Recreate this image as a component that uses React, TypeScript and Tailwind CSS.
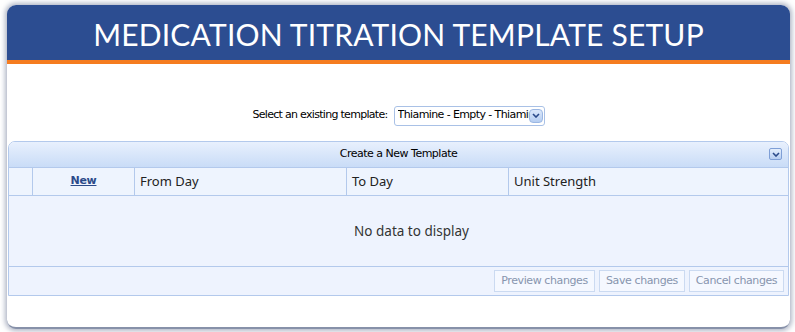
import React from 'react';

const columns = [
  { label: 'From Day', w: 'w-[212px]' },
  { label: 'To Day', w: 'w-[162px]' },
  { label: 'Unit Strength', w: 'flex-1' },
];

const ChevronDown: React.FC = () => (
  <svg width="8" height="5" viewBox="0 0 8 5">
    <path d="M1 1 L4 4 L7 1" fill="none" stroke="#2b4a8a" strokeWidth="1.6" />
  </svg>
);

const App: React.FC = () => {
  return (
    <div className="w-[795px] h-[332px] bg-white pt-[5px] pl-[7px] pr-[5px] overflow-hidden">
      <div className="w-[783px] h-[324px] bg-white rounded-[9px] overflow-hidden flex flex-col shadow-[0_0_5px_2px_rgba(110,120,150,0.55)] border-b-[2px] border-[#8791a9]">
        <header className="h-[55px] shrink-0 bg-[#2c4d91] flex items-center justify-center">
          <h1 className="text-white text-[30px] tracking-[0.2px] leading-none font-['Lato','Noto_Sans',sans-serif] font-normal pt-[2px]">
            MEDICATION TITRATION TEMPLATE SETUP
          </h1>
        </header>
        <div className="h-[4px] shrink-0 bg-[#f57c20]" />

        <div className="flex items-center justify-center gap-[6px] pt-[26px] h-[77px] font-['DejaVu_Sans',Verdana,sans-serif] text-[11px] text-black">
          <span className="tracking-[-0.7px]">Select an existing template:</span>
          <div className="flex items-center h-[20px] w-[151px] border border-[#a9c1e6] rounded-[3px] bg-white pl-[3px] pr-[1px]">
            <span className="flex-1 min-w-0 overflow-hidden whitespace-nowrap tracking-[-0.6px]">Thiamine - Empty - Thiamir</span>
            <span className="w-[14px] h-[14px] rounded-[4px] bg-gradient-to-b from-[#dbe8fb] to-[#b5cdf1] border border-[#9bb7e3] flex items-center justify-center shrink-0">
              <ChevronDown />
            </span>
          </div>
        </div>

        <div className="mx-[1px] border border-[#b3c9ec] rounded-t-[7px] font-['Noto_Sans',sans-serif]">
          <div className="h-[25px] rounded-t-[6px] bg-gradient-to-b from-[#e8f0fd] to-[#c9dcf7] flex items-center relative">
            <span className="flex-1 text-center text-[11px] text-black font-['DejaVu_Sans',Verdana,sans-serif] tracking-[-0.5px]">
              Create a New Template
            </span>
            <span className="absolute right-[6px] top-[6px] w-[13px] h-[12px] rounded-[2px] bg-gradient-to-b from-[#e4eefc] to-[#b7cef2] border border-[#7f9fd6] flex items-center justify-center">
              <ChevronDown />
            </span>
          </div>
          <div className="flex h-[28px] bg-[#eef4fe] border-t border-[#b3c9ec] text-[13px] text-[#222]">
            <div className="w-[24px] border-r border-[#b3c9ec]" />
            <div className="w-[102px] border-r border-[#b3c9ec] flex items-center justify-center">
              <a className="underline font-bold text-[11px] text-[#2b4a8a] font-['DejaVu_Sans',Verdana,sans-serif] tracking-[-0.3px]">
                New
              </a>
            </div>
            {columns.map((c, i) => (
              <div
                key={c.label}
                className={`${c.w} ${i < columns.length - 1 ? 'border-r border-[#b3c9ec]' : ''} flex items-center pl-[5px]`}
              >
                {c.label}
              </div>
            ))}
          </div>
          <div className="h-[71px] bg-[#eef3fe] border-t border-[#b3c9ec] flex items-center justify-center pl-[26px] text-[13.5px] text-[#333]">
            No data to display
          </div>
          <div className="h-[29px] bg-[#eef3fe] border-t border-[#b3c9ec] flex items-center justify-end gap-[4px] pr-[4px] font-['DejaVu_Sans',Verdana,sans-serif] text-[11px] text-[#8795ae] tracking-[-0.4px]">
            <button className="h-[22px] w-[101px] border border-[#cbdaf1] bg-[#f5f8ff]">Preview changes</button>
            <button className="h-[22px] w-[86px] border border-[#cbdaf1] bg-[#f5f8ff]">Save changes</button>
            <button className="h-[22px] w-[95px] border border-[#cbdaf1] bg-[#f5f8ff]">Cancel changes</button>
          </div>
        </div>
      </div>
    </div>
  );
};

export default App;
